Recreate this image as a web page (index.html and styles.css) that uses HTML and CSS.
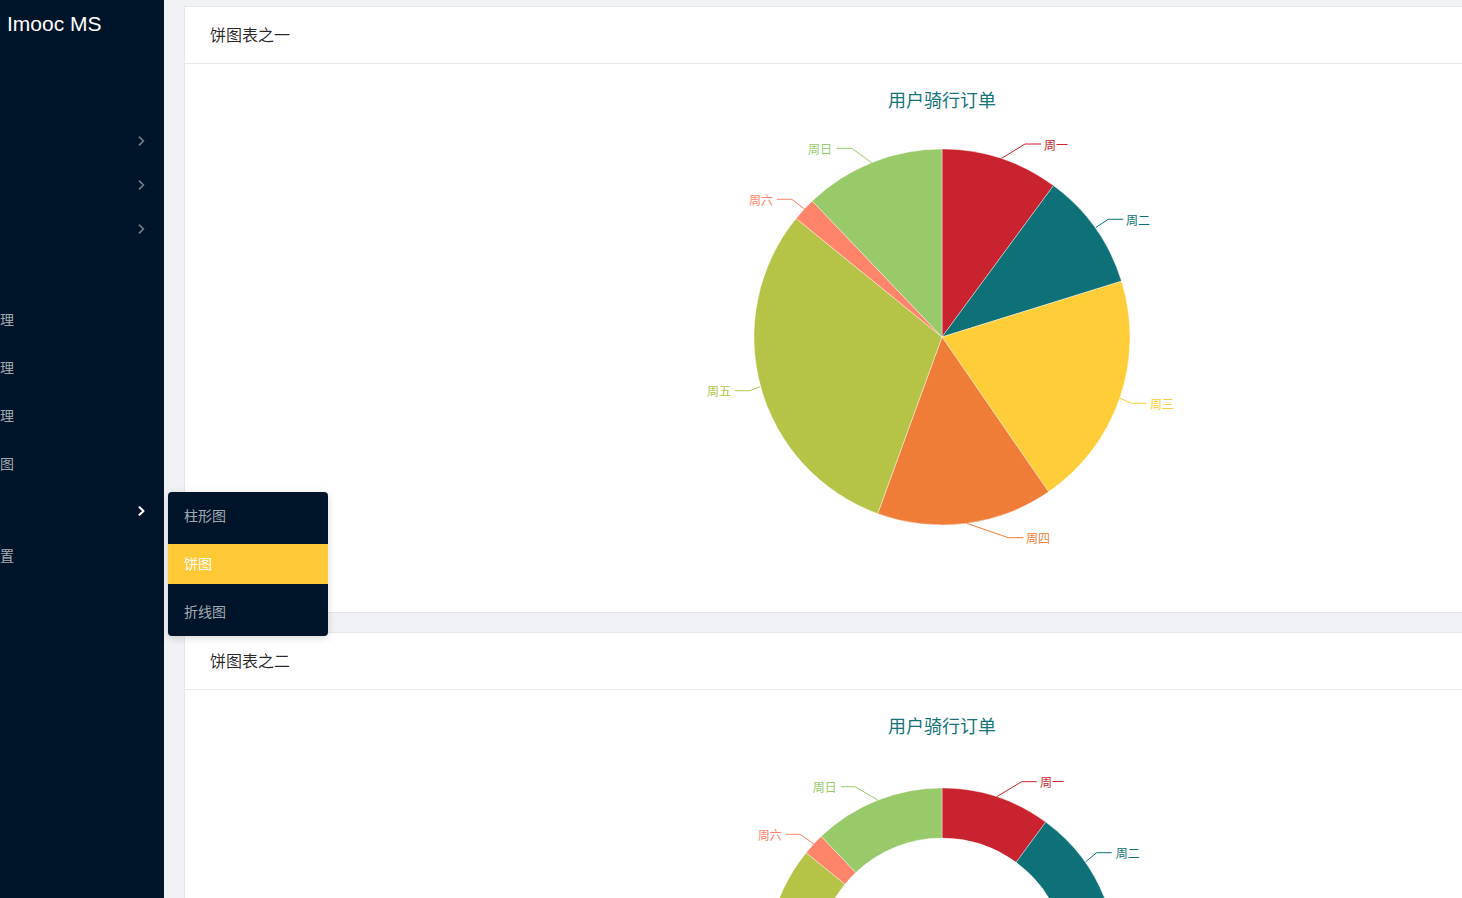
FILE: index.html
```html
<!DOCTYPE html>
<html lang="zh">
<head>
<meta charset="utf-8">
<title>Imooc MS</title>
<link rel="stylesheet" href="styles.css">
</head>
<body>
<div class="app">
  <aside class="sider">
    <div class="logo">Imooc MS</div>
    <ul class="menu">
      <li class="menu-item short"><span class="label"></span><svg class="arrow" width="8" height="10" viewBox="0 0 8 10"><polyline points="1.5,1.2 5.5,5 1.5,8.8" /></svg></li>
      <li class="menu-item short"><span class="label"></span><svg class="arrow" width="8" height="10" viewBox="0 0 8 10"><polyline points="1.5,1.2 5.5,5 1.5,8.8" /></svg></li>
      <li class="menu-item short"><span class="label"></span><svg class="arrow" width="8" height="10" viewBox="0 0 8 10"><polyline points="1.5,1.2 5.5,5 1.5,8.8" /></svg></li>
      <li class="menu-spacer"></li>
      <li class="menu-item"><span class="label">理</span></li>
      <li class="menu-item"><span class="label">理</span></li>
      <li class="menu-item"><span class="label">理</span></li>
      <li class="menu-item"><span class="label">图</span></li>
      <li class="menu-item active"><span class="label"></span><svg class="arrow" width="8" height="10" viewBox="0 0 8 10"><polyline points="1.5,1.2 5.5,5 1.5,8.8" /></svg></li>
      <li class="menu-item last"><span class="label">置</span></li>
    </ul>
  </aside>

  <div class="popup">
    <div class="popup-item">柱形图</div>
    <div class="popup-item selected">饼图</div>
    <div class="popup-item">折线图</div>
  </div>

  <main class="content">
    <section class="card">
      <header class="card-head">饼图表之一</header>
      <div class="card-body">
        <svg class="chart" width="1466" height="500" viewBox="0 0 1466 500">
          <text class="chart-title" x="733" y="11">用户骑行订单</text>
          <g class="slices">
            <path fill="#c8232f" d="M733,249 L733,61 A188,188 0 0 1 844.47,97.60 Z"/>
            <path fill="#0e7178" d="M733,249 L844.47,97.60 A188,188 0 0 1 912.53,193.18 Z"/>
            <path fill="#fecd38" d="M733,249 L912.53,193.18 A188,188 0 0 1 839.61,403.86 Z"/>
            <path fill="#f07d37" d="M733,249 L839.61,403.86 A188,188 0 0 1 668.70,425.66 Z"/>
            <path fill="#b5c447" d="M733,249 L668.70,425.66 A188,188 0 0 1 587.09,130.45 Z"/>
            <path fill="#ff8469" d="M733,249 L587.09,130.45 A188,188 0 0 1 603.26,112.94 Z"/>
            <path fill="#98ca6a" d="M733,249 L603.26,112.94 A188,188 0 0 1 733,61 Z"/>
          </g>
          <g class="labels">
            <polyline stroke="#c8232f" points="792.7,70.3 816,56 832,56"/>
            <text fill="#c8232f" x="835" y="56">周一</text>
            <polyline stroke="#0e7178" points="887,139.3 899.3,131.3 914.3,131.3"/>
            <text fill="#0e7178" x="917" y="131.3">周二</text>
            <polyline stroke="#fecd38" points="911,310.3 922.7,315.3 937.7,315.3"/>
            <text fill="#fecd38" x="941" y="315.3">周三</text>
            <polyline stroke="#f07d37" points="757.7,435.3 799.3,449.7 814.3,449.7"/>
            <text fill="#f07d37" x="817" y="449.7">周四</text>
            <polyline stroke="#b5c447" points="551,298.7 541,302.7 526,302.7"/>
            <text class="end" fill="#b5c447" x="522" y="302.7">周五</text>
            <polyline stroke="#ff8469" points="596,121.3 582.7,111.3 567.7,111.3"/>
            <text class="end" fill="#ff8469" x="564" y="111.3">周六</text>
            <polyline stroke="#98ca6a" points="662.7,74.7 642.7,60.3 627.7,60.3"/>
            <text class="end" fill="#98ca6a" x="623" y="60.3">周日</text>
          </g>
        </svg>
      </div>
    </section>

    <section class="card">
      <header class="card-head">饼图表之二</header>
      <div class="card-body">
        <svg class="chart" width="1466" height="500" viewBox="0 0 1466 500">
          <text class="chart-title" x="733" y="11">用户骑行订单</text>
          <g class="slices">
            <path fill="#c8232f" d="M733,74 A175,175 0 0 1 836.76,108.07 L807.11,148.34 A125,125 0 0 0 733,124 Z"/>
            <path fill="#0e7178" d="M836.76,108.07 A175,175 0 0 1 900.11,197.04 L852.38,211.89 A125,125 0 0 0 807.11,148.34 Z"/>
            <path fill="#fecd38" d="M900.11,197.04 A175,175 0 0 1 832.24,393.15 L803.89,351.96 A125,125 0 0 0 852.38,211.89 Z"/>
            <path fill="#f07d37" d="M832.24,393.15 A175,175 0 0 1 673.15,413.45 L690.25,366.46 A125,125 0 0 0 803.89,351.96 Z"/>
            <path fill="#b5c447" d="M673.15,413.45 A175,175 0 0 1 597.18,138.66 L635.99,170.19 A125,125 0 0 0 690.25,366.46 Z"/>
            <path fill="#ff8469" d="M597.18,138.66 A175,175 0 0 1 612.23,122.35 L646.74,158.54 A125,125 0 0 0 635.99,170.19 Z"/>
            <path fill="#98ca6a" d="M612.23,122.35 A175,175 0 0 1 733,74 L733,124 A125,125 0 0 0 646.74,158.54 Z"/>
          </g>
          <g class="labels">
            <polyline stroke="#c8232f" points="787.7,82.7 812.7,67.7 827.7,67.7"/>
            <text fill="#c8232f" x="831" y="67.7">周一</text>
            <polyline stroke="#0e7178" points="876.7,147.7 887.7,138.7 902.7,138.7"/>
            <text fill="#0e7178" x="906.7" y="138.7">周二</text>
            <polyline stroke="#fecd38" points="898.4,306.2 911,312 926,312"/>
            <text fill="#fecd38" x="929" y="312">周三</text>
            <polyline stroke="#f07d37" points="755.2,422.6 765,437 780,437"/>
            <text fill="#f07d37" x="783" y="437">周四</text>
            <polyline stroke="#b5c447" points="564.4,295.8 551,300 536,300"/>
            <text class="end" fill="#b5c447" x="532" y="300">周五</text>
            <polyline stroke="#ff8469" points="605,130 591,120.3 577,120.3"/>
            <text class="end" fill="#ff8469" x="572.7" y="120.3">周六</text>
            <polyline stroke="#98ca6a" points="668.7,86 646,72.7 632,72.7"/>
            <text class="end" fill="#98ca6a" x="627.7" y="72.7">周日</text>
          </g>
        </svg>
      </div>
    </section>
  </main>
</div>
</body>
</html>
```
FILE: styles.css
```css
* { box-sizing: border-box; }
html, body {
  margin: 0;
  padding: 0;
  height: 100%;
  overflow: hidden;
}
body {
  font-family: "Noto Sans CJK SC", "Noto Sans", "Liberation Sans", sans-serif;
  font-size: 14px;
  color: rgba(0, 0, 0, 0.85);
  background: #f0f2f5;
}
.app {
  display: flex;
  height: 898px;
  width: 1462px;
  overflow: hidden;
}
.sider {
  flex: 0 0 164px;
  width: 164px;
  height: 100%;
  background: #001529;
}
.logo {
  height: 48px;
  line-height: 47px;
  padding-left: 7px;
  font-family: "Liberation Sans", Arial, sans-serif;
  font-size: 21px;
  color: #fff;
  white-space: nowrap;
}
.menu {
  list-style: none;
  margin: 0;
  padding: 71px 0 0 0;
}
.menu-item {
  height: 48px;
  display: flex;
  align-items: center;
  justify-content: space-between;
  padding-right: 18px;
  color: rgba(255, 255, 255, 0.65);
  font-size: 14px;
}
.menu-item.short { height: 44px; }
.menu-item.last { height: 40px; }
.menu-spacer { height: 44px; }
.label { line-height: 20px; }
.arrow polyline {
  fill: none;
  stroke: rgba(255, 255, 255, 0.45);
  stroke-width: 1.7;
  stroke-linecap: round;
  stroke-linejoin: round;
}
.menu-item.active .arrow polyline {
  stroke: #fff;
  stroke-width: 2;
}

.popup {
  position: absolute;
  left: 168px;
  top: 492px;
  width: 160px;
  padding: 4px 0;
  background: #001529;
  border-radius: 4px;
  box-shadow: 0 2px 8px rgba(0, 0, 0, 0.15);
  z-index: 10;
  display: flex;
  flex-direction: column;
  gap: 8px;
}
.popup-item {
  height: 40px;
  line-height: 38px;
  padding-left: 16px;
  font-size: 14px;
  color: rgba(255, 255, 255, 0.65);
}
.popup-item.selected {
  background: #ffc837;
  color: #fff;
}

.content {
  flex: 1 1 auto;
  min-width: 0;
  padding: 6px 0 0 20px;
  overflow: hidden;
}
.card {
  width: 1516px;
  background: #fff;
  border: 1px solid #e8e8e8;
  margin-bottom: 19px;
}
.card-head {
  height: 57px;
  line-height: 54px;
  padding: 0 25px;
  font-size: 16px;
  color: rgba(0, 0, 0, 0.85);
  border-bottom: 1px solid #e8e8e8;
}
.card-body {
  padding: 24px;
}
.chart {
  display: block;
  font-family: "Noto Sans CJK SC", "Noto Sans", sans-serif;
}
.chart-title {
  font-size: 18px;
  fill: #137479;
  text-anchor: middle;
  dominant-baseline: central;
}
.slices path {
  stroke: #fff;
  stroke-width: 0.4;
}
.labels polyline {
  fill: none;
  stroke-width: 1;
}
.labels text {
  font-size: 12px;
  dominant-baseline: central;
}
.labels text.end { text-anchor: end; }
```
